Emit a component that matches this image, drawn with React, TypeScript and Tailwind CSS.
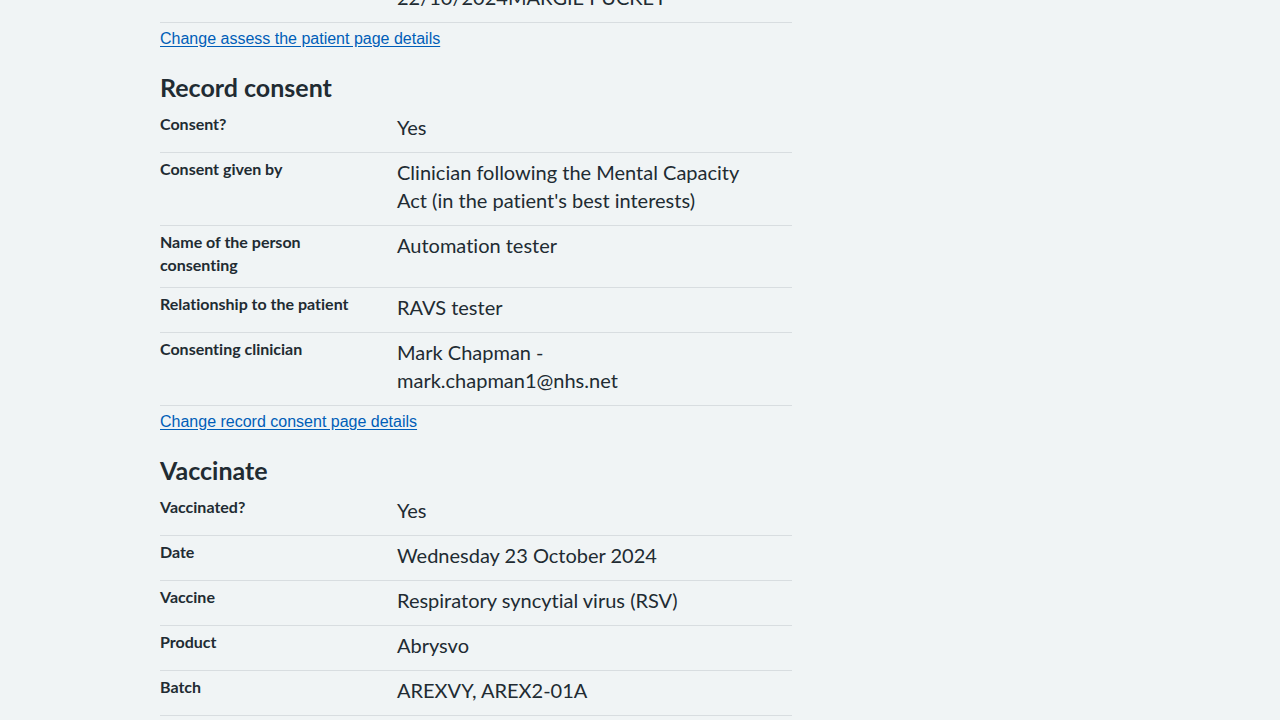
type Row = { key: string; value: string[] }

const consentRows: Row[] = [
    { key: 'Consent?', value: ['Yes'] },
    { key: 'Consent given by', value: ["Clinician following the Mental Capacity Act (in the patient's best interests)"] },
    { key: 'Name of the person consenting', value: ['Automation tester'] },
    { key: 'Relationship to the patient', value: ['RAVS tester'] },
    { key: 'Consenting clinician', value: ['Mark Chapman - mark.chapman1@nhs.net'] },
]

const vaccinateRows: Row[] = [
    { key: 'Vaccinated?', value: ['Yes'] },
    { key: 'Date', value: ['Wednesday 23 October 2024'] },
    { key: 'Vaccine', value: ['Respiratory syncytial virus (RSV)'] },
    { key: 'Product', value: ['Abrysvo'] },
    { key: 'Batch', value: ['AREXVY, AREX2-01A'] },
]

function SummaryRow({ row }: { row: Row }) {
    return (
        <div className="flex border-b border-[#d8dde0]">
            <dt className="w-[237px] shrink-0 pr-4 pt-[5px] pb-[11px] text-[16px] leading-[22.5px] font-bold">{row.key}</dt>
            <dd className="flex-1 pr-[30px] pt-[5px] pb-[11px] text-[20px] leading-[28px]">
                {row.value.map((v, i) => (
                    <div key={i}>{v}</div>
                ))}
            </dd>
        </div>
    )
}

function ChangeLink({ children }: { children: string }) {
    return (
        <p className="pt-[3px]">
            <a href="#" className="font-['Liberation_Sans',Arial,sans-serif] text-[16px] leading-[24px] text-[#005eb8] underline underline-offset-[2px]">
                {children}
            </a>
        </p>
    )
}

export default function App() {
    return (
        <div className="min-h-screen overflow-hidden bg-[#f0f4f5] text-[#212b32] font-['Lato','Noto_Sans',sans-serif] [font-variant-ligatures:none]">
            <div className="mx-auto w-[960px]">
                <div className="w-[632px]">
                    <dl className="-mt-[50px]">
                        <SummaryRow row={{ key: 'Assessment date', value: ['Tuesday 22 October 2024', '22/10/2024MARGIE PUCKEY'] }} />
                    </dl>
                    <ChangeLink>Change assess the patient page details</ChangeLink>

                    <h2 className="mt-[20px] mb-[5px] text-[25px] leading-[32px] font-bold">Record consent</h2>
                    <dl>
                        {consentRows.map((r) => (
                            <SummaryRow key={r.key} row={r} />
                        ))}
                    </dl>
                    <ChangeLink>Change record consent page details</ChangeLink>

                    <h2 className="mt-[20px] mb-[5px] text-[25px] leading-[32px] font-bold">Vaccinate</h2>
                    <dl>
                        {vaccinateRows.map((r) => (
                            <SummaryRow key={r.key} row={r} />
                        ))}
                    </dl>
                </div>
            </div>
        </div>
    )
}
